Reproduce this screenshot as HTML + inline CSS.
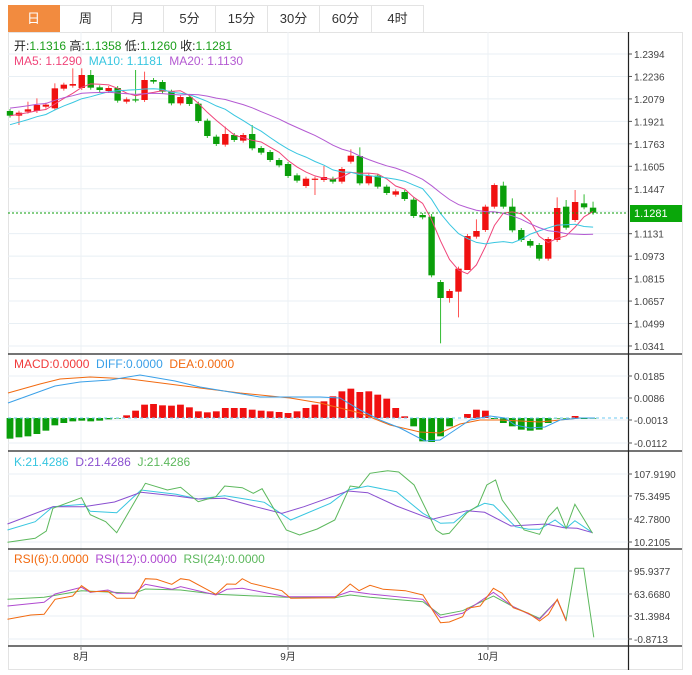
<!DOCTYPE html>
<html><head><meta charset="utf-8">
<style>
body{margin:0;background:#fff;width:692px;height:675px;overflow:hidden;font-family:"Liberation Sans","Noto Sans CJK SC",sans-serif}
.tabs{position:absolute;left:8px;top:5px;height:27px;display:flex}
.tabs div{width:51px;height:26px;border:1px solid #e3e3e3;border-left:none;text-align:center;line-height:26px;font-size:13px;color:#333}
.tabs div:first-child{background:#f28b3f;color:#fff;border-color:#f28b3f}
svg{position:absolute;left:0;top:0}
</style></head><body>
<div class="tabs"><div>日</div><div>周</div><div>月</div><div>5分</div><div>15分</div><div>30分</div><div>60分</div><div>4时</div></div>
<svg id="s" width="692" height="675" font-family="Liberation Sans, Noto Sans CJK SC, sans-serif"></svg>
<script>
var s=document.getElementById('s'),h='';
function L(x1,y1,x2,y2,c,w,d){h+='<line x1="'+x1+'" y1="'+y1+'" x2="'+x2+'" y2="'+y2+'" stroke="'+c+'" stroke-width="'+(w||1)+'"'+(d?' stroke-dasharray="'+d+'"':'')+'/>';}
function T(x,y,t,c,sz,a){h+='<text x="'+x+'" y="'+y+'" fill="'+c+'" font-size="'+(sz||12)+'"'+(a?' text-anchor="'+a+'"':'')+'>'+t+'</text>';}
function P(pts,c){h+='<polyline fill="none" stroke="'+c+'" stroke-width="1" points="'+pts.map(function(p){return p[0].toFixed(1)+','+p[1].toFixed(1)}).join(' ')+'"/>';}
h+='<rect x="8.5" y="32.5" width="674" height="637" fill="none" stroke="#e3e3e3"/>';
var gx=[81,288,488];
var pl=['1.2394','1.2236','1.2079','1.1921','1.1763','1.1605','1.1447','1.1289','1.1131','1.0973','1.0815','1.0657','1.0499','1.0341'];
for(var i=0;i<14;i++){var y=54+i*22.46;L(8,y,628,y,'#e8eff4');if(i!=7){L(628,y,632,y,'#555');T(634,y+4,pl[i],'#444',10);}}
gx.forEach(function(x){L(x,32,x,646,'#edf1f4');});
[354,451,549,646].forEach(function(y){L(8,y,682,y,'#222',1.2);});
L(628.5,32,628.5,670,'#222',1.2);
var C=[[153,167,0],[158,167,1],[148,155,1],[135,153,1],[134,140,1],[85,145,1],[74,86,1],[72,77,1],[45,84,1],[45,83,0],[82,90,0],[84,93,1],[84,122,0],[118,125,1],[118,121,0],[60,120,1],[60,65,0],[66,95,0],[95,130,0],[111,130,1],[111,132,0],[131,183,0],[182,228,0],[230,252,0],[222,254,1],[225,240,0],[225,242,1],[222,265,0],[264,278,0],[276,300,0],[300,316,0],[312,348,0],[346,362,0],[356,378,1],[356,359,1],[351,360,1],[356,365,0],[327,365,1],[287,305,1],[288,370,0],[347,370,1],[347,380,0],[380,399,0],[394,404,1],[396,417,0],[419,468,0],[465,472,0],[470,646,0],[666,714,0],[693,714,1],[626,695,1],[528,630,1],[513,530,1],[440,510,1],[375,440,1],[377,440,0],[440,511,0],[510,540,0],[543,557,0],[555,596,0],[537,596,1],[444,540,1],[440,503,0],[426,480,1],[430,442,0],[443,458,0]];
var W={8:25,15:30,48:462,49:850,50:728,51:772,40:262,39:268,16:35,9:25,10:30,25:200,28:195,36:318,35:405,63:420,64:390,65:403,66:425,62:412,55:370,56:365,57:415,53:478,52:540,6:70,7:68,2:195,3:125,4:115};
var ry=function(z){return 60+z/3;};
var closes=[];
C.forEach(function(c,i){var x=10+i*8.97,t=ry(c[0]),b=ry(c[1]),col=c[2]?'#f01010':'#0a9e0a';
var wt=t-2,wb=b+2;var w=W[i+1];if(w!==undefined){if(ry(w)<t)wt=ry(w);else wb=ry(w);}
L(x,wt,x,wb,c[2]?'#f55':'#3b3',1);h+='<rect x="'+(x-3.2)+'" y="'+t+'" width="6.4" height="'+Math.max(b-t,1.2)+'" fill="'+col+'"/>';
closes.push(c[2]?t:b);});
function ma(n,c,off){var p=[];for(var i=0;i<closes.length;i++){var a=0,k=0;for(var j=Math.max(0,i-n+1);j<=i;j++){a+=closes[j];k++;}var v=a/k;if(i<n)v+=off*(n-k)/n;p.push([10+i*8.97,v]);}P(p,c);}
ma(5,'#f0457a',0);ma(10,'#38c6e0',10);ma(20,'#b45ad2',-8);
L(8,213,628,213,'#0a9e0a',1,'2,2');
h+='<rect x="630" y="205" width="52" height="17" fill="#0aa70a"/>';T(634,217,'1.1281','#fff',11);
h+='<text x="14" y="50" font-size="12" fill="#222">开:<tspan fill="#1a9e1a">1.1316</tspan>  高:<tspan fill="#1a9e1a">1.1358</tspan>  低:<tspan fill="#1a9e1a">1.1260</tspan>  收:<tspan fill="#1a9e1a">1.1281</tspan></text>';
h+='<text x="14" y="65" font-size="12" xml:space="preserve"><tspan fill="#f0457a">MA5: 1.1290</tspan>  <tspan fill="#38c6e0">MA10: 1.1181</tspan>  <tspan fill="#b45ad2">MA20: 1.1130</tspan></text>';
var zx=function(z){return z/2.27;},zy=function(z){return 350+z/3;};
[['0.0185',376],['0.0086',398],['-0.0013',420],['-0.0112',443]].forEach(function(a){L(8,a[1],628,a[1],'#e8eff4');L(628,a[1],632,a[1],'#555');T(634,a[1]+4,a[0],'#444',10);});
var M=[-62,-58,-55,-48,-38,-22,-15,-10,-8,-10,-8,-4,-2,8,22,40,42,38,37,40,32,20,17,20,30,30,30,25,22,20,18,15,20,30,40,50,65,80,88,78,80,70,58,30,5,-25,-70,-72,-55,-25,0,12,25,22,-3,-15,-25,-35,-38,-35,-15,-2,-2,6,-3,-2];
M.forEach(function(v,i){var x=10+i*8.97;var hh=v/3;h+='<rect x="'+(x-3.4)+'" y="'+(hh>0?418-hh:418)+'" width="6.8" height="'+Math.abs(hh)+'" fill="'+(v>0?'#f01010':'#0a9e0a')+'"/>';});
L(8,418,628,418,'#6cc8f0',1,'3,3');
P([[8,393],[40,384],[60,379],[90,377],[130,379],[200,388],[240,393],[290,398],[320,403],[360,413],[390,425],[420,432],[440,433],[460,424],[480,420],[500,420],[520,421],[540,422],[560,420],[580,418],[595,418]],'#f26a10');
P([[8,403],[55,386],[80,382],[110,380],[140,375],[175,381],[200,387],[230,392],[260,397],[290,397],[320,397],[340,398],[360,410],[380,420],[400,428],[425,441],[440,440],[455,430],[470,420],[490,416],[505,418],[515,425],[530,428],[545,427],[560,420],[580,418],[595,418]],'#3aa0e8');
h+='<text x="14" y="368" font-size="12" xml:space="preserve"><tspan fill="#f03a3a">MACD:0.0000</tspan>  <tspan fill="#3aa0e8">DIFF:0.0000</tspan>  <tspan fill="#f26a10">DEA:0.0000</tspan></text>';
[['107.9190',474],['75.3495',496],['42.7800',519],['10.2105',542]].forEach(function(a){L(8,a[1],628,a[1],'#e8eff4');L(628,a[1],632,a[1],'#555');T(634,a[1]+4,a[0],'#444',10);});
function Z(a,c){P(a.map(function(p){return [zx(p[0]),zy(p[1])];}),c);}
Z([[17,540],[80,515],[120,470],[190,463],[205,484],[265,488],[320,420],[400,433],[450,447],[510,437],[560,448],[600,457],[660,510],[750,460],[790,420],[835,408],[900,425],[960,490],[1000,520],[1030,518],[1060,485],[1100,460],[1120,465],[1170,530],[1200,538],[1225,538],[1260,510],[1285,535],[1305,512],[1345,548]],'#38c6e0');
Z([[17,522],[120,470],[190,470],[260,456],[320,427],[400,438],[450,447],[510,445],[580,470],[640,490],[690,470],[790,423],[835,428],[900,468],[980,508],[1060,482],[1100,487],[1160,528],[1240,522],[1280,533],[1310,535],[1345,548]],'#8a4fd0');
Z([[17,577],[80,565],[105,543],[120,475],[185,443],[205,494],[240,515],[265,548],[330,400],[380,420],[410,412],[450,455],[490,440],[510,408],[550,413],[575,430],[595,416],[650,540],[680,555],[720,537],[760,510],[795,408],[815,412],[840,370],[880,362],[905,366],[940,405],[990,540],[1005,553],[1020,550],[1060,488],[1085,467],[1105,405],[1125,390],[1140,450],[1190,540],[1225,553],[1245,500],[1265,472],[1285,535],[1305,463],[1345,550]],'#5cb85c');
h+='<text x="14" y="466" font-size="12" xml:space="preserve"><tspan fill="#38c6e0">K:21.4286</tspan>  <tspan fill="#8a4fd0">D:21.4286</tspan>  <tspan fill="#5cb85c">J:21.4286</tspan></text>';
[['95.9377',571],['63.6680',594],['31.3984',616],['-0.8713',639]].forEach(function(a){L(8,a[1],628,a[1],'#e8eff4');L(628,a[1],632,a[1],'#555');T(634,a[1]+4,a[0],'#444',10);});
Z([[17,748],[100,742],[185,722],[305,730],[330,717],[410,720],[490,733],[650,742],[760,743],[795,735],[840,742],[960,755],[1000,795],[1050,782],[1120,738],[1165,770],[1225,805],[1265,750],[1285,810],[1305,655],[1325,655],[1348,862]],'#5cb85c');
Z([[17,768],[100,757],[125,732],[185,712],[205,727],[245,720],[265,730],[305,730],[330,703],[390,718],[410,710],[490,735],[515,718],[550,715],[650,740],[760,740],[795,724],[840,732],[960,748],[1000,803],[1050,790],[1120,727],[1165,770],[1225,808],[1265,750],[1285,810]],'#b04ad0');
Z([[17,808],[70,795],[100,793],[125,748],[165,738],[185,707],[205,725],[245,724],[265,745],[305,745],[330,686],[355,688],[390,703],[410,686],[430,690],[490,733],[515,702],[535,703],[550,686],[570,700],[640,722],[660,745],[760,743],[795,702],[815,722],[840,706],[870,718],[920,722],[960,735],[1000,818],[1020,816],[1050,800],[1060,775],[1090,768],[1120,715],[1140,730],[1165,773],[1200,790],[1225,813],[1245,793],[1265,748],[1285,813]],'#f26a10');
h+='<text x="14" y="563" font-size="12" xml:space="preserve"><tspan fill="#f26a10">RSI(6):0.0000</tspan>  <tspan fill="#b04ad0">RSI(12):0.0000</tspan>  <tspan fill="#5cb85c">RSI(24):0.0000</tspan></text>';
[['8月',81],['9月',288],['10月',488]].forEach(function(a){L(a[1],646,a[1],650,'#888');T(a[1],660,a[0],'#333',10,'middle');});
s.innerHTML=h;
</script>
</body></html>
